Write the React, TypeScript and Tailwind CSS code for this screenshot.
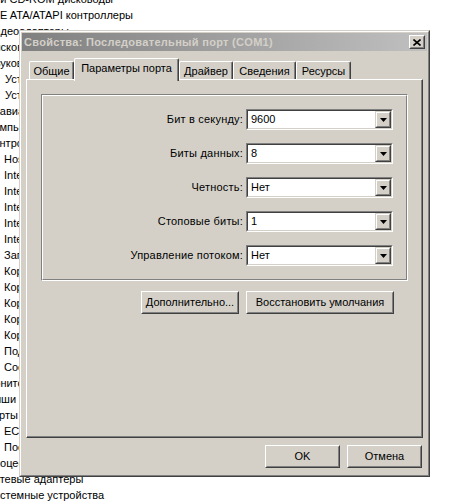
import React from 'react';

const tree = [
  { t: 'DVD и CD-ROM дисководы', c: '-ml-[26px]' },
  { t: 'IDE ATA/ATAPI контроллеры', c: '-ml-[11px]' },
  { t: 'Видеоадаптеры', c: '-ml-[13px]' },
  { t: 'Дисковые устройства', c: '-ml-[13px]' },
  { t: 'Звуковые, видео и игровые устройства', c: '-ml-[12px]' },
  { t: 'Устройство с поддержкой High Definition Audio', c: 'ml-[5px]' },
  { t: 'Устройство с поддержкой High Definition Audio', c: 'ml-[5px]' },
  { t: 'Клавиатуры', c: '-ml-[13px]' },
  { t: 'Компьютер', c: '-ml-[13px]' },
  { t: 'Контроллеры универсальной последовательной шины USB', c: '-ml-[13px]' },
  { t: 'Host-контроллер USB', c: 'ml-[4px]' },
  { t: 'Intel(R) 82801G (ICH7 Family) USB Universal Host Controller - 27C8', c: 'ml-[4px]' },
  { t: 'Intel(R) 82801G (ICH7 Family) USB Universal Host Controller - 27C9', c: 'ml-[4px]' },
  { t: 'Intel(R) 82801G (ICH7 Family) USB Universal Host Controller - 27CA', c: 'ml-[4px]' },
  { t: 'Intel(R) 82801G (ICH7 Family) USB Universal Host Controller - 27CB', c: 'ml-[4px]' },
  { t: 'Intel(R) 82801G (ICH7 Family) USB2 Enhanced Host Controller - 27CC', c: 'ml-[4px]' },
  { t: 'Запоминающее устройство для USB', c: 'ml-[4px]' },
  { t: 'Корневой USB концентратор', c: 'ml-[4px]' },
  { t: 'Корневой USB концентратор', c: 'ml-[4px]' },
  { t: 'Корневой USB концентратор', c: 'ml-[4px]' },
  { t: 'Корневой USB концентратор', c: 'ml-[4px]' },
  { t: 'Корневой USB концентратор', c: 'ml-[4px]' },
  { t: 'Поддержка USB принтера', c: 'ml-[4px]' },
  { t: 'Составное USB устройство', c: 'ml-[4px]' },
  { t: 'Мониторы', c: '-ml-[15px]' },
  { t: 'Мыши и иные указывающие устройства', c: '-ml-[16px]' },
  { t: 'Порты (COM и LPT)', c: '-ml-[15px]' },
  { t: 'ECP порт принтера (LPT1)', c: 'ml-[4px]' },
  { t: 'Последовательный порт (COM1)', c: 'ml-[4px]' },
  { t: 'Процессоры', c: '-ml-[14px]' },
  { t: 'Сетевые адаптеры', c: '-ml-[14px]' },
  { t: 'Системные устройства', c: '-ml-[14px]' },
];

const fields = [
  { label: 'Бит в секунду:', value: '9600' },
  { label: 'Биты данных:', value: '8' },
  { label: 'Четность:', value: 'Нет' },
  { label: 'Стоповые биты:', value: '1' },
  { label: 'Управление потоком:', value: 'Нет' },
];

function Button({ label, className }: { label: string; className: string }) {
  return (
    <div className={`border border-t-white border-l-white border-r-[#404040] border-b-[#404040] ${className}`}>
      <div className="w-full h-full flex items-center justify-center border border-t-[#d4d0c8] border-l-[#d4d0c8] border-r-[#808080] border-b-[#808080] text-black">
        {label}
      </div>
    </div>
  );
}

function Combo({ value }: { value: string }) {
  return (
    <div className="h-[21px] border border-t-[#808080] border-l-[#808080] border-r-white border-b-white">
      <div className="h-full flex items-center bg-white border border-t-[#404040] border-l-[#404040] border-r-[#d4d0c8] border-b-[#d4d0c8]">
        <span className="flex-1 pl-[3px] text-black">{value}</span>
        <div className="w-[16px] h-[17px] border border-t-[#d4d0c8] border-l-[#d4d0c8] border-r-[#404040] border-b-[#404040] bg-[#d4d0c8]">
          <div className="w-full h-full flex items-center justify-center border border-t-white border-l-white border-r-[#808080] border-b-[#808080]">
            <svg width="7" height="4" viewBox="0 0 7 4">
              <polygon points="0,0 7,0 3.5,4" fill="#000" />
            </svg>
          </div>
        </div>
      </div>
    </div>
  );
}

function Tab({ label, className, active }: { label: string; className: string; active?: boolean }) {
  if (active) {
    return (
      <div className={`relative z-10 h-[23px] -mb-[2px] pb-[3px] bg-[#d4d0c8] flex items-center justify-center rounded-t-[2px] border-t border-l border-r border-t-white border-l-white border-r-[#404040] shadow-[inset_-1px_0_0_#808080] ${className}`}>
        {label}
      </div>
    );
  }
  return (
    <div className={`h-[18px] pt-[1px] flex items-center justify-center rounded-t-[2px] border-t border-l border-r border-t-white border-l-white border-r-[#404040] shadow-[inset_-1px_0_0_#808080] ${className}`}>
      {label}
    </div>
  );
}

export default function App() {
  return (
    <div className="relative w-[461px] h-[502px] overflow-hidden bg-white text-[11px] text-black font-['Tahoma','Liberation_Sans',sans-serif]">
      <ul className="-mt-[9px] leading-[16px]">
        {tree.map((item, i) => (
          <li key={i} className={`h-[16px] whitespace-nowrap ${item.c}`}>
            {item.t}
          </li>
        ))}
      </ul>

      <div className="absolute left-[19px] top-[30px] w-[411px] h-[447px] border border-t-[#d4d0c8] border-l-[#d4d0c8] border-r-[#404040] border-b-[#404040]">
        <div className="w-full h-full p-[1px] bg-[#d4d0c8] border border-t-white border-l-white border-r-[#808080] border-b-[#808080] flex flex-col">
          <div className="h-[18px] flex items-center bg-gradient-to-r from-[#808080] to-[#c0c0c0]">
            <span className="flex-1 pl-[2px] font-bold tracking-[0.3px] text-[#d4d0c8] whitespace-nowrap">
              Свойства: Последовательный порт (COM1)
            </span>
            <div className="mr-[2px] w-[16px] h-[14px] bg-[#d4d0c8] border border-t-white border-l-white border-r-[#404040] border-b-[#404040]">
              <div className="w-full h-full flex items-center justify-center border border-t-[#d4d0c8] border-l-[#d4d0c8] border-r-[#808080] border-b-[#808080]">
                <svg width="8" height="7" viewBox="0 0 8 7">
                  <path d="M0.5 0.5 L7.5 6.5 M7.5 0.5 L0.5 6.5" stroke="#000" strokeWidth="1.6" />
                </svg>
              </div>
            </div>
          </div>

          <div className="px-[4px] pt-[7px] flex flex-col">
            <div className="h-[21px] flex items-end pl-[3px]">
              <Tab label="Общие" className="w-[45px]" />
              <Tab label="Параметры порта" className="w-[105px]" active />
              <Tab label="Драйвер" className="w-[54px]" />
              <Tab label="Сведения" className="w-[63px]" />
              <Tab label="Ресурсы" className="w-[55px]" />
            </div>

            <div className="h-[359px] border border-t-white border-l-white border-r-[#404040] border-b-[#404040] shadow-[inset_-1px_-1px_0_#808080] px-[14px] pt-[14px]">
              <div className="border border-t-[#808080] border-l-[#808080] border-r-white border-b-white">
                <div className="border border-t-white border-l-white border-r-[#808080] border-b-[#808080] pt-[13px] pb-[13px] pr-[13px]">
                  <div className="grid grid-cols-[1fr_147px] gap-x-[3px] gap-y-[13px] items-center">
                    {fields.map((f) => (
                      <React.Fragment key={f.label}>
                        <span className="text-right whitespace-nowrap tracking-[0.2px]">{f.label}</span>
                        <Combo value={f.value} />
                      </React.Fragment>
                    ))}
                  </div>
                </div>
              </div>

              <div className="mt-[10px] flex justify-end gap-[7px] pr-[14px]">
                <Button label="Дополнительно..." className="w-[98px] h-[23px]" />
                <Button label="Восстановить умолчания" className="w-[148px] h-[23px]" />
              </div>
            </div>

            <div className="pt-[7px] flex justify-end gap-[7px] pr-[1px]">
              <Button label="OK" className="w-[75px] h-[23px]" />
              <Button label="Отмена" className="w-[75px] h-[23px]" />
            </div>
          </div>
        </div>
      </div>
    </div>
  );
}
